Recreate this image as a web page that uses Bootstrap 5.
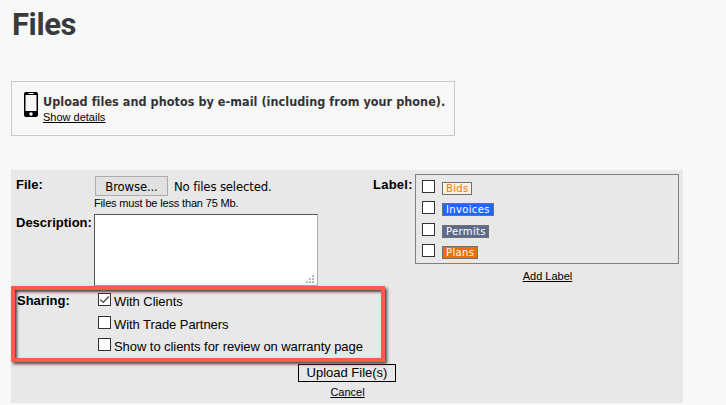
<!DOCTYPE html>
<html lang="en">
<head>
<meta charset="utf-8">
<title>Files</title>
<meta name="viewport" content="width=device-width, initial-scale=1">
<link href="https://cdn.jsdelivr.net/npm/bootstrap@5.3.0/dist/css/bootstrap.min.css" rel="stylesheet">
<style>
body{background:#f7f9f8;color:#000;font:13px/16px "Liberation Sans",Arial,sans-serif;height:405px;overflow:hidden;padding-left:11px}
h1{font:700 31px/36px Roboto,sans-serif;letter-spacing:-.4px;color:#3a3a3a;padding:7px 0 0 1px;height:81px}
a,a:hover{color:#000;text-underline-offset:1px}
.notice{width:444px;height:55px;background:#f7f7f7;border:1px solid #c8c8c8;padding:10px 0 0 12px;margin-bottom:34px}
.notice strong{font:700 12.5px/19px "DejaVu Sans Condensed","DejaVu Sans",sans-serif;font-stretch:condensed;letter-spacing:.05px;color:#333;white-space:nowrap}
.notice-text{padding-left:5px}
.fine{font-size:11px;line-height:13px}
.panel{width:672px;height:233px;background:#e8e8e8}
.fields{height:116px}
.main-col{width:361px}
.file-row{height:44px}
.hint{padding-top:1px;letter-spacing:-.16px}
.caption{width:83px;padding:7px 0 0 5px;font-weight:700;white-space:nowrap}
.caption.desc{padding-top:1px}
.label-caption{width:43px;padding:7px 0 0 1px;letter-spacing:.25px}
.browse{width:73px;height:20px;border:1px solid #adadad;background:#e1e1e1;line-height:19px;padding:0;margin-left:1px}
.native{font-family:"DejaVu Sans Condensed","DejaVu Sans",sans-serif;font-stretch:condensed;font-size:13px;letter-spacing:-.15px;color:#000;white-space:nowrap}
.picker{padding-top:6px}
.chosen{padding:1px 0 0 6px}
textarea.notes{width:224px;height:72px;border:1px solid;border-color:#555 #aaa #aaa #555;background:#fff;resize:none;display:block;padding:2px}
.grip{right:4px;bottom:3px}
.labels{width:264px;height:90px;border:1px solid #808080;padding:5px 0 0 6px}
.add-label{padding:6px 0 0 1px}
.form-check-input.box{width:13px;height:13px;margin:0;border:1px solid #333;border-radius:0;background-color:#fff;flex:none}
.form-check-input.box:checked{background-image:url("data:image/svg+xml,%3Csvg xmlns='http://www.w3.org/2000/svg' viewBox='0 0 11 11'%3E%3Cpath d='M1.2 5.4l3 3L9.8 2.5' fill='none' stroke='%23444' stroke-width='1.3'/%3E%3C/svg%3E");background-size:11px 11px}
.tagname{height:13px;border:1px solid #6c7078;font:10px/12px "DejaVu Sans",sans-serif;letter-spacing:.35px;color:#fff;margin:2px 0 0 7px;white-space:nowrap;padding-left:3px}
.t1{width:30px;background:#fff0e0;color:#f07800}.t2{width:52px;background:#1c68ff}.t3{width:47px;background:#5c6b8c}.t4{width:36px;background:#ec7000}
.r1{height:21px}.r2{height:22px}.r3{height:21px}
.sharing{width:374px;height:76px;border:4px solid #ff5a4a;box-shadow:2px 2px 3px #444,inset 2px 2px 3px #444}
.sharing .caption{width:83px;padding:3px 0 0 2px}
.choices{padding-top:3px}
.choice{height:23px;gap:3px;white-space:nowrap;letter-spacing:-.06px}
.choice:nth-child(2){height:22px}
.choice span{padding-top:1px}
.send{width:98px;height:18px;border:1px solid #000;border-radius:0;background:#e8e8e8;font-size:13px;line-height:14px;padding:0 0 1px;color:#000;margin-top:2px}
.cancel{padding:4px 0 0 1px}
</style>
</head>
<body>
<h1 class="m-0">Files</h1>
<section class="notice d-flex">
  <svg class="flex-shrink-0" width="14" height="26" viewBox="0 0 14 26"><rect width="14" height="25" rx="2"/><path fill="#f7f7f7" d="M1.5 3h11v16h-11zM4.5 1h5v1h-5z"/><circle cx="7" cy="22" r="1.7" fill="#fff"/></svg>
  <div class="notice-text d-flex flex-column"><strong>Upload files and photos by e-mail (including from your phone).</strong><a href="#" class="fine">Show details</a></div>
</section>
<form class="panel">
  <div class="fields d-flex">
    <div class="main-col">
      <div class="d-flex file-row">
        <div class="caption">File:</div>
        <div class="picker">
          <div class="d-flex align-items-center"><button type="button" class="btn rounded-0 browse native">Browse...</button><span class="native chosen">No files selected.</span></div>
          <div class="fine hint">Files must be less than 75 Mb.</div>
        </div>
      </div>
      <div class="d-flex">
        <div class="caption desc">Description:</div>
        <div class="position-relative"><textarea class="notes" aria-label="Description"></textarea>
          <svg class="grip position-absolute" width="8" height="8" fill="#b8b8b8"><path d="M6 0h2v2H6zM3 3h2v2H3zM6 3h2v2H6zM0 6h2v2H0zM3 6h2v2H3zM6 6h2v2H6z"/></svg></div>
      </div>
    </div>
    <div class="label-caption fw-bold">Label:</div>
    <div class="pt-1 text-center">
      <div class="labels text-start">
        <div class="d-flex r1"><input type="checkbox" class="form-check-input box" aria-label="Bids"><span class="tagname t1">Bids</span></div>
        <div class="d-flex r2"><input type="checkbox" class="form-check-input box" aria-label="Invoices"><span class="tagname t2">Invoices</span></div>
        <div class="d-flex r3"><input type="checkbox" class="form-check-input box" aria-label="Permits"><span class="tagname t3">Permits</span></div>
        <div class="d-flex"><input type="checkbox" class="form-check-input box" aria-label="Plans"><span class="tagname t4">Plans</span></div>
      </div>
      <a href="#" class="fine d-block add-label">Add Label</a>
    </div>
  </div>
  <div class="sharing d-flex position-relative">
    <div class="caption">Sharing:</div>
    <div class="choices">
      <label class="choice d-flex"><input type="checkbox" class="form-check-input box" checked><span>With Clients</span></label>
      <label class="choice d-flex"><input type="checkbox" class="form-check-input box"><span>With Trade Partners</span></label>
      <label class="choice d-flex"><input type="checkbox" class="form-check-input box"><span>Show to clients for review on warranty page</span></label>
    </div>
  </div>
  <div class="d-flex flex-column align-items-center">
    <button type="button" class="btn send">Upload File(s)</button>
    <a href="#" class="fine cancel">Cancel</a>
  </div>
</form>
<script src="https://cdn.jsdelivr.net/npm/bootstrap@5.3.0/dist/js/bootstrap.bundle.min.js"></script>
</body>
</html>
